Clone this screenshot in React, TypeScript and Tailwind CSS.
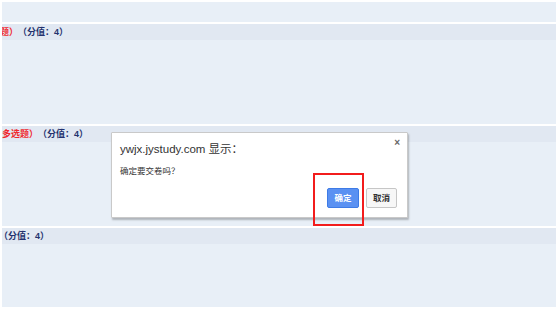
import React from 'react';

const cjk = { fontFamily: '"Liberation Sans", "Noto Sans CJK SC", sans-serif' };

interface SectionProps {
  type?: string;
  offset?: string;
  bodyH: string;
}

function Section({ type, offset = 'ml-0', bodyH }: SectionProps) {
  return (
    <div className="overflow-hidden">
      <div className="h-[16px] bg-[#e1e8f2] flex items-center text-[9px] font-bold leading-none whitespace-nowrap">
        <span className={offset}>
          {type && <span className="text-[#f0282d]">{type}）</span>}
          <span className="text-[#24326e]">（分值：4）</span>
        </span>
      </div>
      <div className={`bg-[#e8eff7] ${bodyH}`} />
    </div>
  );
}

export default function App() {
  return (
    <div
      className="relative w-[558px] h-[309px] bg-white overflow-hidden [text-spacing-trim:space-all]"
      style={cjk}
    >
      <div className="flex flex-col gap-[2px] pt-[2px] px-[2px]">
        <div className="h-[20px] bg-[#e8eff7]" />
        <Section type="题" offset="-ml-[2px]" bodyH="h-[84px]" />
        <Section type="多选题" offset="ml-0" bodyH="h-[84px]" />
        <Section offset="-ml-[3px]" bodyH="h-[63px]" />
      </div>

      {/* alert dialog */}
      <div className="absolute left-[111px] top-[132px] w-[297px] h-[86px] bg-white border border-[#c9c9c9] shadow-[1px_2px_2px_rgba(0,0,0,0.25)] rounded-[1px]">
        <div className="absolute right-[7px] top-[5px] text-[10px] leading-none text-[#666] font-bold">×</div>
        <div className="pl-[8px] pt-[11px] text-[11.5px] leading-none text-[#333]">ywjx.jystudy.com 显示：</div>
        <div className="pl-[8px] pt-[11px] text-[8.5px] leading-none text-[#333]">确定要交卷吗？</div>
        <div className="flex justify-end gap-[7px] pr-[10px] pt-[13px]">
          <button className="w-[32px] h-[20px] bg-[#5a91f2] border border-[#3e7be6] rounded-[2px] text-white text-[8.5px] font-bold leading-none">
            确定
          </button>
          <button className="w-[31px] h-[20px] bg-[#f7f7f7] border border-[#c6c6c6] rounded-[2px] text-[#333] text-[8.5px] font-bold leading-none">
            取消
          </button>
        </div>
      </div>

      {/* red highlight box */}
      <div className="absolute left-[313px] top-[173px] w-[51px] h-[53px] border-2 border-[#f21c1c]" />
    </div>
  );
}
